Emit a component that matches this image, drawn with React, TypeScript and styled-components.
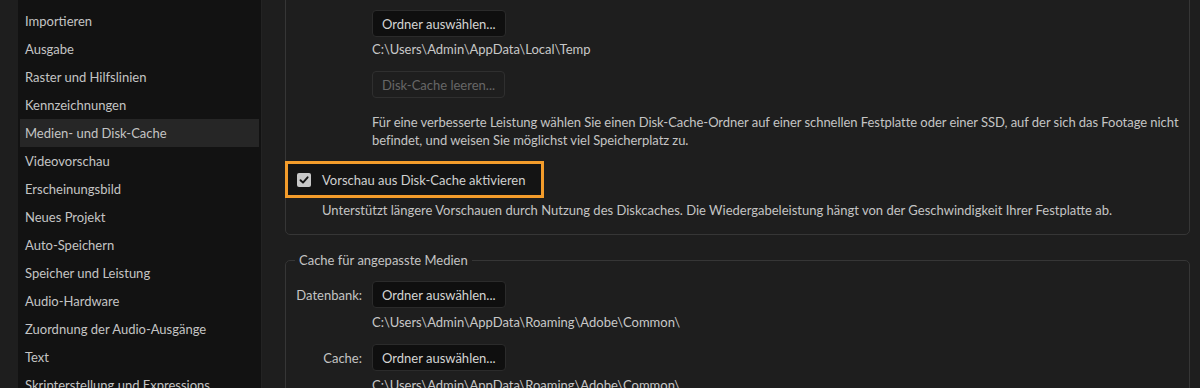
import React from "react";
import styled, { createGlobalStyle } from "styled-components";

const GlobalStyle = createGlobalStyle`
  html, body { margin: 0; padding: 0; background: #1e1e1e; }
  body { font-family: Lato, "Noto Sans", sans-serif; font-size: 13px; color: #c6c6c6; }
  * { box-sizing: border-box; }
`;

const Page = styled.div`
  display: flex;
  height: 388px;
  overflow: hidden;
  background: #1e1e1e;
`;

const Sidebar = styled.nav`
  margin-left: 18px;
  width: 244px;
  background: #121212;
  padding: 0 2px;
  border-right: 1px solid #232323;
  flex-shrink: 0;
`;

const NavList = styled.ul`
  list-style: none;
  margin: -21px 0 0;
  padding: 0;
`;

const NavItem = styled.li<{ $active?: boolean }>`
  height: 28px;
  display: flex;
  align-items: center;
  padding-left: 5px;
  font-size: 13px;
  color: #c4c4c4;
  white-space: nowrap;
  background: ${(p) => (p.$active ? "#262626" : "transparent")};
`;

const Content = styled.main`
  flex: 1;
  padding: 0 10px 0 23px;
  display: flex;
  flex-direction: column;
`;

const Panel = styled.section`
  margin-top: -20px;
  border: 1px solid #363636;
  border-radius: 5px;
  padding: 29px 0 15px;
  display: flex;
  flex-direction: column;
  flex-shrink: 0;
  & > * { flex-shrink: 0; }
`;

const Indented = styled.div<{ $indent: number }>`
  padding-left: ${(p) => p.$indent}px;
  display: flex;
  flex-direction: column;
  align-items: flex-start;
  & > * { flex-shrink: 0; }
`;

const Button = styled.button<{ $disabled?: boolean; $gapTop?: number }>`
  height: 27px;
  margin-top: ${(p) => p.$gapTop ?? 0}px;
  padding: 0 9px;
  border-radius: 4px;
  font-family: Lato, "Noto Sans", sans-serif;
  font-size: 13px;
  border: 1px solid ${(p) => (p.$disabled ? "#2f2f2f" : "#2b2b2b")};
  background: ${(p) => (p.$disabled ? "#1e1e1e" : "#0f0f0f")};
  color: ${(p) => (p.$disabled ? "#676767" : "#d4d4d4")};
  cursor: default;
`;

const PathText = styled.div`
  height: 18px;
  line-height: 18px;
  margin-top: 3px;
  font-size: 13px;
  color: #c8c8c8;
  white-space: nowrap;
`;

const Paragraph = styled.p`
  margin: 15px 0 0;
  font-size: 13px;
  line-height: 18px;
  color: #c4c4c4;
  max-width: 815px;
  letter-spacing: -0.05px;
`;

const HighlightRow = styled.label`
  margin: 12px 0 0 -1px;
  align-self: flex-start;
  display: flex;
  align-items: center;
  gap: 11px;
  height: 37px;
  padding: 0 16px 0 9px;
  border: 3px solid #f39c2b;
  background: #141414;
  font-size: 13px;
  color: #d0d0d0;
`;

const CheckBox = styled.span`
  width: 14px;
  height: 14px;
  border-radius: 2px;
  background: #c8c8c8;
  display: flex;
  align-items: center;
  justify-content: center;
`;

const Hint = styled.div`
  margin-top: 3px;
  padding-left: 36px;
  line-height: 18px;
  font-size: 13px;
  color: #c4c4c4;
  white-space: nowrap;
`;

const FieldSet = styled.fieldset`
  margin: 16px 0 0;
  border: 1px solid #363636;
  border-radius: 5px;
  padding: 0;
  min-height: 200px;
  flex-shrink: 0;
`;

const Legend = styled.legend`
  margin-left: 9px;
  padding: 0 4px;
  font-size: 13px;
  line-height: 18px;
  color: #c4c4c4;
`;

const FieldGrid = styled.div`
  display: grid;
  grid-template-columns: 76px auto;
  column-gap: 10px;
  align-items: center;
  justify-items: start;
  margin-top: 12px;
`;

const FieldLabel = styled.span`
  justify-self: end;
  font-size: 13px;
  color: #c4c4c4;
`;

const FieldPath = styled(PathText)`
  grid-column: 2;
  margin-top: 5px;
  margin-bottom: 13px;
`;

const Check = () => (
  <svg width="10" height="10" viewBox="0 0 10 10">
    <path d="M1.5 5.2 L4 7.6 L8.6 2.3" fill="none" stroke="#141414" strokeWidth="1.9" strokeLinecap="round" strokeLinejoin="round" />
  </svg>
);

const navItems = [
  "Anzeige",
  "Importieren",
  "Ausgabe",
  "Raster und Hilfslinien",
  "Kennzeichnungen",
  "Medien- und Disk-Cache",
  "Videovorschau",
  "Erscheinungsbild",
  "Neues Projekt",
  "Auto-Speichern",
  "Speicher und Leistung",
  "Audio-Hardware",
  "Zuordnung der Audio-Ausgänge",
  "Text",
  "Skripterstellung und Expressions",
];

export default function App() {
  return (
    <>
      <GlobalStyle />
      <Page>
        <Sidebar>
          <NavList>
            {navItems.map((n) => (
              <NavItem key={n} $active={n === "Medien- und Disk-Cache"}>
                {n}
              </NavItem>
            ))}
          </NavList>
        </Sidebar>
        <Content>
          <Panel>
            <Indented $indent={86}>
              <Button>Ordner auswählen...</Button>
              <PathText>C:\Users\Admin\AppData\Local\Temp</PathText>
              <Button $disabled $gapTop={13}>
                Disk-Cache leeren...
              </Button>
              <Paragraph>
                Für eine verbesserte Leistung wählen Sie einen Disk-Cache-Ordner auf einer schnellen Festplatte oder einer
                SSD, auf der sich das Footage nicht befindet, und weisen Sie möglichst viel Speicherplatz zu.
              </Paragraph>
            </Indented>
            <HighlightRow>
              <CheckBox>
                <Check />
              </CheckBox>
              Vorschau aus Disk-Cache aktivieren
            </HighlightRow>
            <Hint>
              Unterstützt längere Vorschauen durch Nutzung des Diskcaches. Die Wiedergabeleistung hängt von der
              Geschwindigkeit Ihrer Festplatte ab.
            </Hint>
          </Panel>
          <FieldSet>
            <Legend>Cache für angepasste Medien</Legend>
            <FieldGrid>
              <FieldLabel>Datenbank:</FieldLabel>
              <Button>Ordner auswählen...</Button>
              <FieldPath>C:\Users\Admin\AppData\Roaming\Adobe\Common\</FieldPath>
              <FieldLabel>Cache:</FieldLabel>
              <Button>Ordner auswählen...</Button>
              <FieldPath>C:\Users\Admin\AppData\Roaming\Adobe\Common\</FieldPath>
            </FieldGrid>
          </FieldSet>
        </Content>
      </Page>
    </>
  );
}
